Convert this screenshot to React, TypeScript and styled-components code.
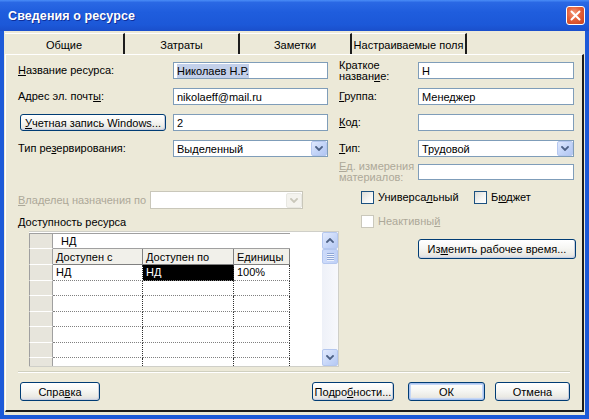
import React from 'react';
import styled, { createGlobalStyle, css } from 'styled-components';

const Global = createGlobalStyle`
  html, body { margin: 0; padding: 0; background: #ece9d8; }
  body { font-family: "Liberation Sans", Arial, sans-serif; font-size: 11px; color: #000; }
  * { box-sizing: border-box; }
`;

const FONT = `"Liberation Sans", Arial, sans-serif`;
const DIS = '#aca899';

const Window = styled.div`
  width: 589px;
  height: 419px;
  display: flex;
  flex-direction: column;
  background: #1d5ad8;
  overflow: hidden;
`;

const TitleBar = styled.div`
  height: 31px;
  flex: none;
  display: flex;
  align-items: center;
  justify-content: space-between;
  padding: 0 4px 0 8px;
  background: linear-gradient(to bottom, #4a8df7 0%, #2a68e4 8%, #1f5ddd 40%, #1c58d8 80%, #1a4fcb 100%);
`;

const Title = styled.div`
  color: #fff;
  font-family: ${FONT};
  font-weight: bold;
  font-size: 12.5px;
  letter-spacing: 0.1px;
  text-shadow: 1px 1px 0 #0f2f9a;
`;

const CloseBtn = styled.div`
  width: 19px;
  height: 19px;
  border: 1px solid #fff;
  border-radius: 3px;
  background: radial-gradient(circle at 40% 35%, #f49a7a 0%, #e4603a 45%, #c9401c 100%);
  display: flex;
  align-items: center;
  justify-content: center;
  margin-top: -1px;
`;

const Client = styled.div`
  flex: 1;
  margin: 0 4px 4px 4px;
  background: #ece9d8;
  display: flex;
  flex-direction: column;
`;

const TabStrip = styled.div`
  display: flex;
  height: 21px;
  margin-top: 2px;
  padding-left: 1px;
  flex: none;
`;

const Tab = styled.div<{ $w: number }>`
  width: ${(p) => p.$w}px;
  height: 100%;
  display: flex;
  align-items: center;
  justify-content: center;
  border-top: 1px solid #fff;
  border-right: 2px solid #1c1c1c;
  font-family: ${FONT};
  font-size: 11px;
  padding-top: 1px;
`;

const Panel = styled.div`
  flex: 1;
  margin: 0 1px 3px 1px;
  border-top: 1px solid #fff;
  border-left: 1px solid #fff;
  border-right: 2px solid #1c1c1c;
  border-bottom: 2px solid #1c1c1c;
  padding: 7px 0 0 12px;
  display: flex;
  flex-direction: column;
`;

const TopForm = styled.div`
  display: grid;
  grid-template-columns: 155px 166px 79px 156px;
  grid-auto-rows: 17px;
  row-gap: 9px;
  align-items: center;
`;

const Label = styled.div<{ $disabled?: boolean }>`
  font-family: ${FONT};
  font-size: 11px;
  line-height: 11px;
  color: ${(p) => (p.$disabled ? DIS : '#000')};
  white-space: nowrap;
`;

const Acc = styled.span`
  text-decoration: underline;
  text-underline-offset: 1px;
`;

const Field = styled.div<{ $w: number; $h?: number; $disabled?: boolean }>`
  width: ${(p) => p.$w}px;
  height: ${(p) => p.$h ?? 17}px;
  border: 1px solid ${(p) => (p.$disabled ? '#c9c7ba' : '#7f9db9')};
  background: #fff;
  display: flex;
  align-items: center;
  padding-left: 3px;
  font-family: ${FONT};
  font-size: 11px;
  white-space: nowrap;
  overflow: hidden;
`;

const Selected = styled.span`
  background: #c3d0ea;
  padding: 1px 0;
`;

const ComboText = styled.div`
  flex: 1;
`;

const ComboBtn = styled.div<{ $disabled?: boolean }>`
  width: 16px;
  height: 15px;
  border: 1px solid ${(p) => (p.$disabled ? '#e8e8e2' : '#b6c8f0')};
  border-radius: 2px;
  background: ${(p) =>
    p.$disabled ? '#f4f3ee' : 'linear-gradient(135deg, #e0e9fd 0%, #c4d5f8 50%, #b2c6f2 100%)'};
  display: flex;
  align-items: center;
  justify-content: center;
`;

const Chevron = ({ color = '#4d6185', up = false }: { color?: string; up?: boolean }) => (
  <svg width="8" height="5" viewBox="0 0 8 5">
    <path
      d={up ? 'M1 4 L4 1 L7 4' : 'M1 1 L4 4 L7 1'}
      fill="none"
      stroke={color}
      strokeWidth="1.8"
      strokeLinecap="square"
    />
  </svg>
);

const Combo = ({ w, text, disabled }: { w: number; text?: string; disabled?: boolean }) => (
  <Field $w={w} $h={disabled ? 18 : 17} $disabled={disabled}>
    <ComboText>{text}</ComboText>
    <ComboBtn $disabled={disabled}>
      <Chevron color={disabled ? '#c9c7ba' : '#4d6185'} />
    </ComboBtn>
  </Field>
);

const Btn = styled.div<{ $w: number; $h?: number; $default?: boolean; $ml?: number }>`
  width: ${(p) => p.$w}px;
  height: ${(p) => p.$h ?? 19}px;
  margin-left: ${(p) => p.$ml ?? 0}px;
  border: 1px solid #003c74;
  border-radius: 3px;
  background: linear-gradient(to bottom, #ffffff 0%, #f6f6f3 45%, #ebeae4 80%, #d8dbe6 100%);
  box-shadow: inset -1px -1px 0 #c9cfdf;
  display: flex;
  align-items: center;
  justify-content: center;
  font-family: ${FONT};
  font-size: 11px;
  white-space: nowrap;
  ${(p) =>
    p.$default &&
    css`
      box-shadow: inset 0 0 0 1px #a9c2ef, inset 0 0 0 2px #c5d7f6;
    `}
`;

const Lower = styled.div`
  display: grid;
  grid-template-columns: 321px 237px;
`;

const LeftCol = styled.div`
  display: flex;
  flex-direction: column;
  padding-top: 34px;
`;

const OwnerRow = styled.div`
  display: flex;
  align-items: center;
`;

const OwnerLabel = styled(Label)`
  width: 132px;
`;

const AvailLabel = styled(Label)`
  margin-top: 7px;
  line-height: 12px;
`;

const GridBox = styled.div`
  margin-top: 3px;
  margin-left: 11px;
  width: 310px;
  height: 136px;
  border: 1px solid #cfcfc8;
  border-left: none;
  background: #fff;
  display: flex;
  overflow: hidden;
`;

const GridArea = styled.div`
  flex: 1;
  padding-top: 1px;
`;

const Table = styled.div`
  display: grid;
  grid-template-columns: 24px 90px 91px 56px;
  grid-template-rows: 15px 16px;
  grid-auto-rows: 15.5px;
  width: 261px;
  border-top: 1px solid #a0a0a0;
`;

const RowHead = styled.div`
  background: #e7e5dc;
  border-right: 1px solid #a0a0a0;
  border-bottom: 1px solid #ffffff;
  border-left: 1px solid #a0a0a0;
`;

const EntryCell = styled.div`
  grid-column: span 3;
  display: flex;
  align-items: center;
  padding-left: 8px;
  border-bottom: 1px solid #a0a0a0;
  font-family: ${FONT};
  font-size: 11px;
`;

const ColHead = styled.div`
  background: #f1f0ea;
  border-right: 1px solid #808080;
  border-bottom: 1px solid #808080;
  display: flex;
  align-items: center;
  padding-left: 3px;
  font-family: ${FONT};
  font-size: 11px;
  white-space: nowrap;
`;

const Cell = styled.div<{ $sel?: boolean }>`
  border-right: 1px dotted #303030;
  border-bottom: 1px dotted #808080;
  display: flex;
  align-items: center;
  padding-left: 3px;
  font-family: ${FONT};
  font-size: 11px;
  background: ${(p) => (p.$sel ? '#000' : '#fff')};
  color: ${(p) => (p.$sel ? '#fff' : '#000')};
`;

const ScrollBar = styled.div`
  width: 16px;
  display: flex;
  flex-direction: column;
  background: linear-gradient(to right, #eef1f8, #f7f8fc);
`;

const ScrollBtn = styled.div`
  width: 16px;
  height: 17px;
  border: 1px solid #b4c7ef;
  border-radius: 2px;
  background: linear-gradient(135deg, #e2eafd 0%, #c6d6f8 60%, #b6c9f3 100%);
  display: flex;
  align-items: center;
  justify-content: center;
`;

const Thumb = styled.div`
  width: 16px;
  height: 15px;
  border: 1px solid #b4c7ef;
  border-radius: 2px;
  background: linear-gradient(to right, #cddbfa, #bfd0f6);
  display: flex;
  flex-direction: column;
  align-items: center;
  justify-content: center;
  gap: 1px;
`;

const Grip = styled.div`
  width: 7px;
  height: 1px;
  background: #8ea6d6;
  box-shadow: 0 1px 0 #eef3fd;
`;

const ScrollTrack = styled.div`
  flex: 1;
`;

const RightCol = styled.div`
  display: flex;
  flex-direction: column;
  padding-top: 7px;
`;

const UnitsRow = styled.div`
  display: flex;
  align-items: center;
  height: 16px;
`;

const UnitsLabel = styled(Label)`
  width: 79px;
  line-height: 11px;
`;

const CheckRow = styled.div<{ $mt: number }>`
  display: flex;
  align-items: center;
  margin-top: ${(p) => p.$mt}px;
  padding-left: 22px;
`;

const CheckItem = styled.div<{ $w?: number }>`
  display: flex;
  align-items: center;
  gap: 4px;
  width: ${(p) => (p.$w ? `${p.$w}px` : 'auto')};
`;

const Box = styled.div<{ $disabled?: boolean }>`
  width: 13px;
  height: 13px;
  border: 1px solid ${(p) => (p.$disabled ? '#cac8bb' : '#1c5180')};
  background: ${(p) =>
    p.$disabled ? '#fff' : 'linear-gradient(135deg, #dcdcd7 0%, #f6f6f4 60%, #ffffff 100%)'};
`;

const ChangeBtn = styled(Btn)`
  margin-top: 11px;
  margin-left: 79px;
`;

const Separator = styled.div`
  margin-top: 4px;
  margin-right: 12px;
  height: 2px;
  border-top: 1px solid #d0d0bf;
  border-bottom: 1px solid #ffffff;
`;

const ButtonRow = styled.div`
  display: flex;
  align-items: center;
  margin-top: 9px;
  padding-left: 2px;
`;

const Spacer = styled.div`
  flex: 1;
`;

const BtnGap = styled.div<{ $w: number }>`
  width: ${(p) => p.$w}px;
`;

const dataRows = 7;

export default function App() {
  return (
    <>
      <Global />
      <Window>
        <TitleBar>
          <Title>Сведения о ресурсе</Title>
          <CloseBtn>
            <svg width="11" height="11" viewBox="0 0 11 11">
              <path d="M1.5 1.5 L9.5 9.5 M9.5 1.5 L1.5 9.5" stroke="#fff" strokeWidth="2" strokeLinecap="round" />
            </svg>
          </CloseBtn>
        </TitleBar>
        <Client>
          <TabStrip>
            <Tab $w={120}>Общие</Tab>
            <Tab $w={115}>Затраты</Tab>
            <Tab $w={112}>Заметки</Tab>
            <Tab $w={115}>Настраиваемые поля</Tab>
          </TabStrip>
          <Panel>
            <TopForm>
              <Label>
                <Acc>Н</Acc>азвание ресурса:
              </Label>
              <Field $w={155}>
                <Selected>Николаев Н.Р.</Selected>
              </Field>
              <Label>
                Краткое
                <br />
                назван<Acc>и</Acc>е:
              </Label>
              <Field $w={156}>Н</Field>

              <Label>
                Адрес эл. почт<Acc>ы</Acc>:
              </Label>
              <Field $w={155}>nikolaeff@mail.ru</Field>
              <Label>
                <Acc>Г</Acc>руппа:
              </Label>
              <Field $w={156}>Менеджер</Field>

              <Btn $w={146} $h={17} $ml={2}>
                <span>
                  <Acc>У</Acc>четная запись Windows...
                </span>
              </Btn>
              <Field $w={155}>2</Field>
              <Label>
                <Acc>К</Acc>од:
              </Label>
              <Field $w={156} />

              <Label>
                Тип ре<Acc>з</Acc>ервирования:
              </Label>
              <Combo w={155} text="Выделенный" />
              <Label>
                <Acc>Т</Acc>ип:
              </Label>
              <Combo w={156} text="Трудовой" />
            </TopForm>

            <Lower>
              <LeftCol>
                <OwnerRow>
                  <OwnerLabel $disabled>
                    <Acc>В</Acc>ладелец назначения по
                  </OwnerLabel>
                  <Combo w={153} disabled />
                </OwnerRow>
                <AvailLabel>
                  <Acc>Д</Acc>оступность ресурса
                </AvailLabel>
                <GridBox>
                  <GridArea>
                    <Table>
                      <RowHead />
                      <EntryCell>НД</EntryCell>
                      <RowHead />
                      <ColHead>Доступен с</ColHead>
                      <ColHead>Доступен по</ColHead>
                      <ColHead>Единицы</ColHead>
                      <RowHead />
                      <Cell>НД</Cell>
                      <Cell $sel>НД</Cell>
                      <Cell>100%</Cell>
                      {Array.from({ length: dataRows - 1 }).map((_, i) => (
                        <React.Fragment key={i}>
                          <RowHead />
                          <Cell />
                          <Cell />
                          <Cell />
                        </React.Fragment>
                      ))}
                    </Table>
                  </GridArea>
                  <ScrollBar>
                    <ScrollBtn>
                      <Chevron up />
                    </ScrollBtn>
                    <Thumb>
                      <Grip />
                      <Grip />
                      <Grip />
                      <Grip />
                    </Thumb>
                    <ScrollTrack />
                    <ScrollBtn>
                      <Chevron />
                    </ScrollBtn>
                  </ScrollBar>
                </GridBox>
              </LeftCol>

              <RightCol>
                <UnitsRow>
                  <UnitsLabel $disabled>
                    <Acc>Е</Acc>д. измерения
                    <br />
                    материалов:
                  </UnitsLabel>
                  <Field $w={156} $h={16} />
                </UnitsRow>
                <CheckRow $mt={11}>
                  <CheckItem $w={113}>
                    <Box />
                    <Label>
                      Универса<Acc>л</Acc>ьный
                    </Label>
                  </CheckItem>
                  <CheckItem>
                    <Box />
                    <Label>
                      Б<Acc>ю</Acc>джет
                    </Label>
                  </CheckItem>
                </CheckRow>
                <CheckRow $mt={11}>
                  <CheckItem>
                    <Box $disabled />
                    <Label $disabled>
                      Неактивны<Acc>й</Acc>
                    </Label>
                  </CheckItem>
                </CheckRow>
                <ChangeBtn $w={158} $h={20}>
                  <span>
                    Из<Acc>м</Acc>енить рабочее время...
                  </span>
                </ChangeBtn>
              </RightCol>
            </Lower>

            <Separator />
            <ButtonRow>
              <Btn $w={80}>
                <span>
                  Спра<Acc>в</Acc>ка
                </span>
              </Btn>
              <Spacer />
              <Btn $w={82}>
                <span>
                  Подро<Acc>б</Acc>ности...
                </span>
              </Btn>
              <BtnGap $w={14} />
              <Btn $w={77} $default>
                ОК
              </Btn>
              <BtnGap $w={10} />
              <Btn $w={75}>Отмена</Btn>
              <BtnGap $w={12} />
            </ButtonRow>
          </Panel>
        </Client>
      </Window>
    </>
  );
}
